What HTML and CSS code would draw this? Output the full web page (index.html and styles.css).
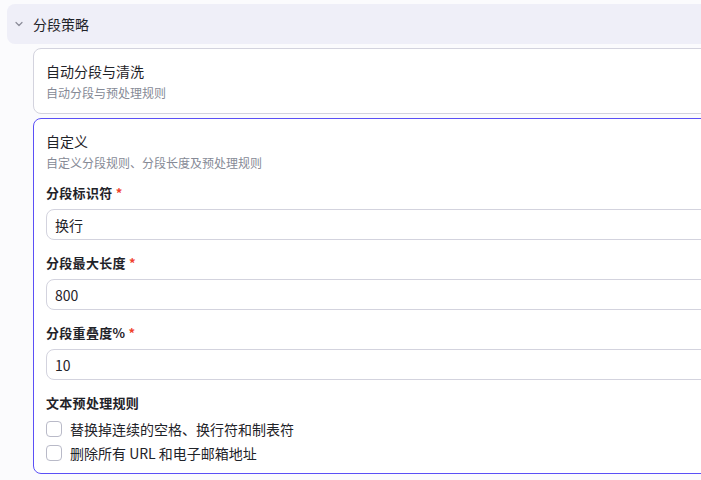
FILE: index.html
```html
<!DOCTYPE html>
<html lang="zh-CN">
<head>
<meta charset="utf-8">
<link rel="stylesheet" href="styles.css">
</head>
<body>
<div class="page">
  <div class="section-head">
    <svg class="chev" width="10" height="10" viewBox="0 0 10 10"><path d="M2 3.5 L5 6.5 L8 3.5" fill="none" stroke="#8b8c99" stroke-width="1.2" stroke-linecap="round" stroke-linejoin="round"/></svg>
    <span class="section-title">分段策略</span>
  </div>
  <div class="options">
    <div class="card">
      <div class="card-title">自动分段与清洗</div>
      <div class="card-desc">自动分段与预处理规则</div>
    </div>
    <div class="card active">
      <div class="card-title">自定义</div>
      <div class="card-desc">自定义分段规则、分段长度及预处理规则</div>
      <div class="field first">
        <div class="label">分段标识符 <span class="req">*</span></div>
        <div class="input">换行</div>
      </div>
      <div class="field">
        <div class="label">分段最大长度 <span class="req">*</span></div>
        <div class="input">800</div>
      </div>
      <div class="field">
        <div class="label">分段重叠度% <span class="req">*</span></div>
        <div class="input">10</div>
      </div>
      <div class="label rules">文本预处理规则</div>
      <div class="check-row"><span class="box"></span><span>替换掉连续的空格、换行符和制表符</span></div>
      <div class="check-row"><span class="box"></span><span>删除所有 URL 和电子邮箱地址</span></div>
    </div>
  </div>
</div>
</body>
</html>
```

FILE: styles.css
```css
html, body {
  margin: 0;
  padding: 0;
  background: #fbfbfd;
  overflow: hidden;
}
body {
  font-family: "Noto Sans CJK SC", "Noto Sans", "Liberation Sans", sans-serif;
  color: #1f2329;
  font-size: 14px;
}
.page {
  width: 820px;
  padding: 4px 0 0 7px;
}
.section-head {
  height: 40px;
  background: #efeff8;
  border-radius: 8px;
  display: flex;
  align-items: center;
  padding-left: 7px;
}
.chev {
  width: 10px;
  height: 10px;
  margin-right: 9px;
}
.section-title {
  font-size: 14px;
  line-height: 20px;
  color: #1f2329;
}
.options {
  padding: 4px 0 0 26px;
  display: flex;
  flex-direction: column;
  gap: 4px;
}
.card {
  background: #ffffff;
  border: 1px solid #d3d3de;
  border-radius: 8px;
  padding: 12px 12px 12px 12px;
  display: flex;
  flex-direction: column;
}
.card.active {
  border-color: #5b50f6;
  padding-bottom: 8px;
}
.card-title {
  font-size: 14px;
  line-height: 20px;
  color: #1f2329;
}
.card-desc {
  font-size: 12px;
  line-height: 16px;
  margin-top: 4px;
  color: #868a96;
}
.field {
  display: flex;
  flex-direction: column;
  margin-top: 13px;
}
.field.first {
  margin-top: 12px;
}
.label {
  font-size: 13px;
  line-height: 20px;
  font-weight: 700;
  color: #1f2329;
  letter-spacing: 0.3px;
}
.req {
  color: #f0422e;
  font-weight: 700;
}
.input {
  margin-top: 6px;
  height: 31px;
  box-sizing: border-box;
  border: 1px solid #d3d3de;
  border-radius: 8px;
  background: #ffffff;
  padding: 0 12px 0 8px;
  display: flex;
  align-items: center;
  font-size: 14px;
  color: #1f2329;
}
.rules {
  margin-top: 13px;
}
.check-row {
  height: 24px;
  display: flex;
  align-items: center;
  font-size: 14px;
  color: #1f2329;
}
.rules + .check-row {
  margin-top: 4px;
}
.box {
  width: 16px;
  height: 16px;
  box-sizing: border-box;
  border: 1px solid #b9bac8;
  border-radius: 4px;
  background: #fff;
  margin-right: 8px;
  flex: none;
}
```
